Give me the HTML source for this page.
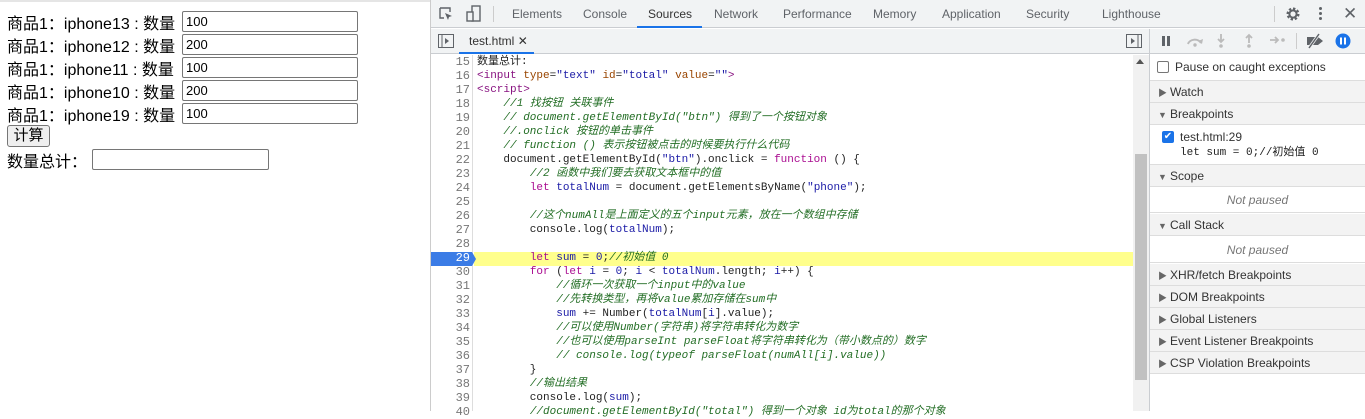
<!DOCTYPE html>
<html><head><meta charset="utf-8">
<style>
*{margin:0;padding:0;box-sizing:border-box}
body{width:1365px;height:411px;overflow:hidden;background:#fff;position:relative;font-family:"Liberation Sans","Noto Sans CJK SC",sans-serif}
.a{position:absolute}
.pg{font-size:16px;color:#000;white-space:nowrap}
.inp{position:absolute;border:1px solid #767676;border-radius:2px;height:21px;background:#fff;font-size:13px;padding-left:3px;line-height:19px}
.dt{font-family:"Liberation Sans","Noto Sans CJK SC",sans-serif;font-size:12px;color:#333}
.tab{position:absolute;top:0;height:28px;line-height:28px;font-size:12px;color:#5f6368}
pre{font-family:"Liberation Mono","Noto Sans CJK SC",monospace;font-size:11px;line-height:14px;color:#222}
.c{color:#236e25;font-style:italic}
.k{color:#aa0d91}
.t{color:#881280}
.at{color:#994500}
.s{color:#1a1aa6}
.v{color:#1a1aa6}
.ln{font-family:"Liberation Mono",monospace;font-size:12px;line-height:14px;color:#777;text-align:right;width:39px}
.hd{position:absolute;left:1150px;width:215px;height:22px;background:#f3f3f3;border-bottom:1px solid #ddd;font-size:12px;color:#333;line-height:22px;padding-left:8px}
.hd b{font-weight:normal;font-size:9px;color:#666;margin-right:5px;display:inline-block;width:7px}
.np{position:absolute;left:1150px;width:215px;height:26px;line-height:26px;text-align:center;font-size:12px;font-style:italic;color:#777;border-bottom:1px solid #ddd}
</style></head><body>
<!-- left page -->
<div class="a" style="left:0;top:0;width:430px;height:2px;background:#e5e5e5"></div>
<div class="a pg" style="left:7px;top:10px">商品1：iphone13 : 数量</div><div class="inp" style="left:182px;top:11px;width:176px">100</div>
<div class="a pg" style="left:7px;top:33px">商品1：iphone12 : 数量</div><div class="inp" style="left:182px;top:34px;width:176px">200</div>
<div class="a pg" style="left:7px;top:56px">商品1：iphone11 : 数量</div><div class="inp" style="left:182px;top:57px;width:176px">100</div>
<div class="a pg" style="left:7px;top:79px">商品1：iphone10 : 数量</div><div class="inp" style="left:182px;top:80px;width:176px">200</div>
<div class="a pg" style="left:7px;top:102px">商品1：iphone19 : 数量</div><div class="inp" style="left:182px;top:103px;width:176px">100</div>
<div class="a" style="left:7px;top:125px;width:43px;height:22px;border:1px solid #767676;border-radius:3px;background:#efefef;font-size:15px;text-align:center;line-height:20px">计算</div>
<div class="a pg" style="left:7px;top:148px">数量总计：</div><div class="inp" style="left:92px;top:149px;width:177px"></div>

<!-- devtools -->
<div class="a" style="left:430px;top:0;width:1px;height:411px;background:#ccc"></div>
<div class="a" style="left:431px;top:0;width:934px;height:28px;background:#f1f3f4;border-bottom:1px solid #cacdd1"></div>
<svg class="a" style="left:438px;top:6px" width="16" height="16" viewBox="0 0 16 16"><path d="M2 2h10v4M2 2v10h4" fill="none" stroke="#5f6368" stroke-width="1.4"/><path d="M7 7l7 3-3 1-1 3z" fill="#5f6368"/></svg>
<svg class="a" style="left:466px;top:5px" width="16" height="18" viewBox="0 0 16 18"><rect x="6" y="1" width="8" height="15" fill="none" stroke="#5f6368" stroke-width="1.4"/><rect x="1" y="7" width="6" height="9" fill="#f1f3f4" stroke="#5f6368" stroke-width="1.4"/></svg>
<div class="a" style="left:493px;top:6px;width:1px;height:16px;background:#ccc"></div>
<div class="tab" style="left:512px">Elements</div>
<div class="tab" style="left:583px">Console</div>
<div class="tab" style="left:648px;color:#333">Sources</div>
<div class="a" style="left:637px;top:26px;width:65px;height:2px;background:#1a73e8"></div>
<div class="tab" style="left:714px">Network</div>
<div class="tab" style="left:783px">Performance</div>
<div class="tab" style="left:873px">Memory</div>
<div class="tab" style="left:942px">Application</div>
<div class="tab" style="left:1026px">Security</div>
<div class="tab" style="left:1102px">Lighthouse</div>
<div class="a" style="left:1274px;top:6px;width:1px;height:16px;background:#ccc"></div>
<svg class="a" style="left:1285px;top:6px" width="16" height="16" viewBox="0 0 16 16"><circle cx="8" cy="8" r="5" fill="none" stroke="#5f6368" stroke-width="3" stroke-dasharray="2.2 1.7"/><circle cx="8" cy="8" r="3.6" fill="none" stroke="#5f6368" stroke-width="2"/></svg>
<div class="a" style="left:1319px;top:7px;width:3px;height:3px;background:#5f6368;border-radius:50%;box-shadow:0 5px #5f6368,0 10px #5f6368"></div>
<div class="a" style="left:1343px;top:4px;font-size:17px;color:#5f6368">✕</div>

<!-- second toolbar -->
<div class="a" style="left:431px;top:29px;width:934px;height:25px;background:#f1f3f4;border-bottom:1px solid #cacdd1"></div>
<svg class="a" style="left:438px;top:34px" width="16" height="14" viewBox="0 0 16 14"><rect x=".5" y=".5" width="15" height="13" fill="none" stroke="#5f6368"/><path d="M4 1v12" stroke="#5f6368"/><path d="M7 4l4 3-4 3z" fill="#5f6368"/></svg>
<div class="a" style="left:469px;top:34px;font-size:12px;color:#333">test.html <span style="font-size:12px">✕</span></div>
<div class="a" style="left:459px;top:52px;width:75px;height:2px;background:#1a73e8"></div>
<svg class="a" style="left:1126px;top:34px" width="16" height="14" viewBox="0 0 16 14"><rect x=".5" y=".5" width="15" height="13" fill="none" stroke="#5f6368"/><path d="M12 1v12" stroke="#5f6368"/><path d="M5 4l4 3-4 3z" fill="#5f6368"/></svg>
<div class="a" style="left:1149px;top:29px;width:1px;height:382px;background:#cacdd1"></div>
<div class="a" style="left:1162px;top:36px;width:3px;height:10px;background:#5f6368;box-shadow:5px 0 #5f6368"></div>
<svg class="a" style="left:1185px;top:34px" width="20" height="14" viewBox="0 0 20 14"><path d="M3 10a7 6 0 0 1 13-1" fill="none" stroke="#bbb" stroke-width="2"/><path d="M13 7l4 3 1-5z" fill="#bbb"/><circle cx="10" cy="11" r="1.7" fill="#bbb"/></svg>
<svg class="a" style="left:1215px;top:33px" width="12" height="16" viewBox="0 0 12 16"><path d="M6 1v8M3 6l3 3 3-3" fill="none" stroke="#bbb" stroke-width="1.8"/><circle cx="6" cy="13" r="1.8" fill="#bbb"/></svg>
<svg class="a" style="left:1243px;top:33px" width="12" height="16" viewBox="0 0 12 16"><path d="M6 10V2M3 5l3-3 3 3" fill="none" stroke="#bbb" stroke-width="1.8"/><circle cx="6" cy="13" r="1.8" fill="#bbb"/></svg>
<svg class="a" style="left:1269px;top:34px" width="18" height="12" viewBox="0 0 18 12"><path d="M1 6h8M6 3l3 3-3 3" fill="none" stroke="#bbb" stroke-width="1.8"/><circle cx="14" cy="6" r="1.8" fill="#bbb"/></svg>
<div class="a" style="left:1296px;top:33px;width:1px;height:16px;background:#ccc"></div>
<svg class="a" style="left:1305px;top:33px" width="20" height="16" viewBox="0 0 20 16"><path d="M2 4h11l5 4-5 4H2z" fill="#5f6368"/><path d="M4 15L14 1" stroke="#f1f3f4" stroke-width="3"/><path d="M4 15L14 1" stroke="#5f6368" stroke-width="1.5"/></svg>
<svg class="a" style="left:1335px;top:33px" width="16" height="16" viewBox="0 0 16 16"><circle cx="8" cy="8" r="7.5" fill="#1a73e8"/><rect x="5" y="4.5" width="2" height="7" fill="#fff"/><rect x="9" y="4.5" width="2" height="7" fill="#fff"/></svg>

<!-- editor -->
<div class="a" style="left:431px;top:55px;width:42px;height:356px;background:#fff;border-right:1px solid #ddd"></div>
<div class="a" style="left:474px;top:252px;width:659px;height:14px;background:#ffff8c"></div>
<svg class="a" style="left:431px;top:252px" width="46" height="14"><path d="M0 0h41l4 7-4 7H0z" fill="#3b7ce6"/></svg>
<div class="a ln" style="left:431px;top:55px">15<br>16<br>17<br>18<br>19<br>20<br>21<br>22<br>23<br>24<br>25<br>26<br>27<br>28<br><span style="color:#fff">29</span><br>30<br>31<br>32<br>33<br>34<br>35<br>36<br>37<br>38<br>39<br>40</div>
<pre class="a" style="left:477px;top:55px">数量总计:
<span class="t">&lt;input</span> <span class="at">type</span>=<span class="s">"text"</span> <span class="at">id</span>=<span class="s">"total"</span> <span class="at">value</span>=<span class="s">""</span><span class="t">&gt;</span>
<span class="t">&lt;script&gt;</span>
    <span class="c">//1 找按钮 关联事件</span>
    <span class="c">// document.getElementById("btn") 得到了一个按钮对象</span>
    <span class="c">//.onclick 按钮的单击事件</span>
    <span class="c">// function () 表示按钮被点击的时候要执行什么代码</span>
    document.getElementById(<span class="s">"btn"</span>).onclick = <span class="k">function</span> () {
        <span class="c">//2 函数中我们要去获取文本框中的值</span>
        <span class="k">let</span> <span class="v">totalNum</span> = document.getElementsByName(<span class="s">"phone"</span>);

        <span class="c">//这个numAll是上面定义的五个input元素，放在一个数组中存储</span>
        console.log(<span class="v">totalNum</span>);

        <span class="k">let</span> <span class="v">sum</span> = <span class="s">0</span>;<span class="c">//初始值 0</span>
        <span class="k">for</span> (<span class="k">let</span> <span class="v">i</span> = <span class="s">0</span>; <span class="v">i</span> &lt; <span class="v">totalNum</span>.length; <span class="v">i</span>++) {
            <span class="c">//循环一次获取一个input中的value</span>
            <span class="c">//先转换类型，再将value累加存储在sum中</span>
            <span class="v">sum</span> += Number(<span class="v">totalNum</span>[<span class="v">i</span>].value);
            <span class="c">//可以使用Number(字符串)将字符串转化为数字</span>
            <span class="c">//也可以使用parseInt parseFloat将字符串转化为（带小数点的）数字</span>
            <span class="c">// console.log(typeof parseFloat(numAll[i].value))</span>
        }
        <span class="c">//输出结果</span>
        console.log(<span class="v">sum</span>);
        <span class="c">//document.getElementById("total") 得到一个对象 id为total的那个对象</span></pre>
<!-- scrollbar -->
<div class="a" style="left:1133px;top:55px;width:16px;height:356px;background:#f1f1f1"></div>
<div class="a" style="left:1136px;top:59px;width:0;height:0;border-left:4px solid transparent;border-right:4px solid transparent;border-bottom:5px solid #555"></div>
<div class="a" style="left:1135px;top:154px;width:12px;height:226px;background:#c1c1c1"></div>

<!-- sidebar -->
<div class="a" style="left:1157px;top:61px;width:12px;height:12px;border:1px solid #767676;border-radius:2px;background:#fff"></div>
<div class="a dt" style="left:1175px;top:60px">Pause on caught exceptions</div>
<div class="a" style="left:1150px;top:80px;width:215px;height:1px;background:#ddd"></div>
<div class="hd" style="top:81px"><b>▶</b>Watch</div>
<div class="hd" style="top:103px"><b>▼</b>Breakpoints</div>
<div class="a" style="left:1162px;top:131px;width:12px;height:12px;background:#1a73e8;border-radius:2px;color:#fff;font-size:10px;line-height:12px;text-align:center">✔</div>
<div class="a dt" style="left:1180px;top:130px">test.html:29</div>
<pre class="a" style="left:1180px;top:146px;font-size:11px;color:#222">let sum = 0;//初始值 0</pre>
<div class="a" style="left:1150px;top:164px;width:215px;height:1px;background:#ddd"></div>
<div class="hd" style="top:165px"><b>▼</b>Scope</div>
<div class="np" style="top:187px">Not paused</div>
<div class="hd" style="top:214px"><b>▼</b>Call Stack</div>
<div class="np" style="top:237px">Not paused</div>
<div class="hd" style="top:264px"><b>▶</b>XHR/fetch Breakpoints</div>
<div class="hd" style="top:286px"><b>▶</b>DOM Breakpoints</div>
<div class="hd" style="top:308px"><b>▶</b>Global Listeners</div>
<div class="hd" style="top:330px"><b>▶</b>Event Listener Breakpoints</div>
<div class="hd" style="top:352px"><b>▶</b>CSP Violation Breakpoints</div>
</body></html>
